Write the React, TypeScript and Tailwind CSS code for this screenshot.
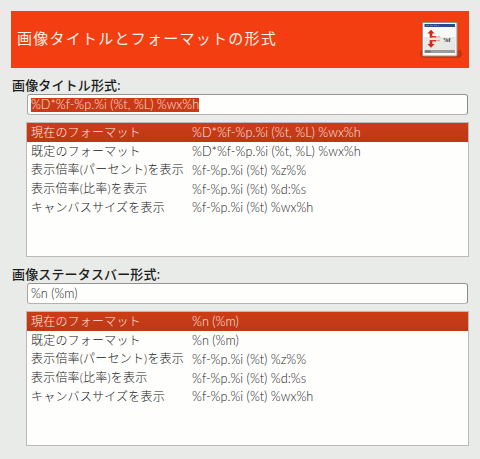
type Row = { name: string; value: string };

const commonRows: Row[] = [
  { name: '表示倍率(パーセント)を表示', value: '%f-%p.%i (%t) %z%%' },
  { name: '表示倍率(比率)を表示', value: '%f-%p.%i (%t) %d:%s' },
  { name: 'キャンバスサイズを表示', value: '%f-%p.%i (%t) %wx%h' },
];

function formatRows(value: string): Row[] {
  return [
    { name: '現在のフォーマット', value },
    { name: '既定のフォーマット', value },
    ...commonRows,
  ];
}

function FormatIcon() {
  return (
    <svg width="44" height="42" viewBox="0 0 44 42" className="shrink-0">
      <path d="M3 31h38q2.500 1.500 2 4.500t-4 3.500H5q-3.500-.5-4-3.500T3 31z" fill="#c9320d" />
      <rect x="3.500" y="3.500" width="34.500" height="33.500" rx="1" fill="#f9f9f8" stroke="#96918b" />
      <rect x="5" y="18" width="31.500" height="13" fill="#e7e7e5" />
      <rect x="5.500" y="5" width="30.500" height="3" fill="#294b8b" />
      <path d="M7 6.500h13" stroke="#7894c0" strokeWidth="0.700" strokeDasharray="3 1" />
      <rect x="5.500" y="31" width="30.500" height="3" fill="#9b9b9b" />
      <rect x="6" y="31.500" width="5.500" height="2" fill="#747474" />
      <path d="M8.500 14.500l3.500-3.800 3.500 3.800h-2.200v4.100h-2.600v-4.100zM8.500 25l3.500 3.800 3.500-3.800h-2.200v-4.100h-2.600V25z" fill="#d92213" />
      <path d="M11 17.800h6M11 21.700h6" stroke="#d33a28" strokeWidth="1.400" />
      <path d="M17 17.800h4M17 21.700h4" stroke="#e9a29a" strokeWidth="1.200" />
      <text x="24" y="22.500" fontSize="7" fontWeight="700" fontFamily="Liberation Serif, serif" textLength="7.500" lengthAdjust="spacingAndGlyphs" fill="#222">%f</text>
    </svg>
  );
}

function FormatSection({ label, value, selected }: { label: string; value: string; selected?: boolean }) {
  return (
    <section className="mt-[9px] h-[180px]">
      <h2 className="h-[17px] pl-px text-[13px] leading-[17px] font-medium tracking-[0.150px] text-[#1c1c1c]">{label}</h2>
      <div className="ml-4 flex h-[21px] w-[441px] items-center rounded-[3px] border border-t-[#96928f] border-r-[#8d8987] border-b-[#b7b2b0] border-l-[#aaa5a3] bg-[#fefefd] pl-[3px] text-[12.650px]">
        <span className={selected ? 'flex h-[14px] items-center bg-[#c93a17] text-[#ffe4dc]' : 'text-[#202020]'}>{value}</span>
      </div>
      <div className="mt-[7px] ml-[15px] h-[135px] w-[443px] border border-[#bdb9b7] bg-[#fefefd]">
        {formatRows(value).map((row, i) => (
          <div
            key={row.name}
            className={`flex h-[18.750px] items-center pl-1 ${i === 0 ? 'bg-linear-to-b from-[#cc3d15] to-[#bd3818] text-[#ffe9e0]' : 'text-[#202020]'}`}
          >
            <span className="w-[161px] shrink-0 pt-px tracking-[0.200px]">{row.name}</span>
            <span className="text-[12.700px]">{row.value}</span>
          </div>
        ))}
      </div>
    </section>
  );
}

export default function App() {
  return (
    <main className="h-[459px] w-[480px] overflow-hidden bg-[#e9ebe8] pt-[11px] pl-[11px] font-['Lato','Noto_Sans_CJK_JP',sans-serif] text-[12px] leading-[18px] font-light whitespace-nowrap">
      <header className="flex h-[57px] w-[458px] items-center justify-between bg-[#f33e12] pr-[6px] pl-[6px]">
        <h1 className="-mt-1 text-[15px] leading-5 font-normal tracking-[1.250px] text-[#fff0e8]">画像タイトルとフォーマットの形式</h1>
        <FormatIcon />
      </header>
      <FormatSection label="画像タイトル形式:" value="%D*%f-%p.%i (%t, %L) %wx%h" selected />
      <FormatSection label="画像ステータスバー形式:" value="%n (%m)" />
    </main>
  );
}
